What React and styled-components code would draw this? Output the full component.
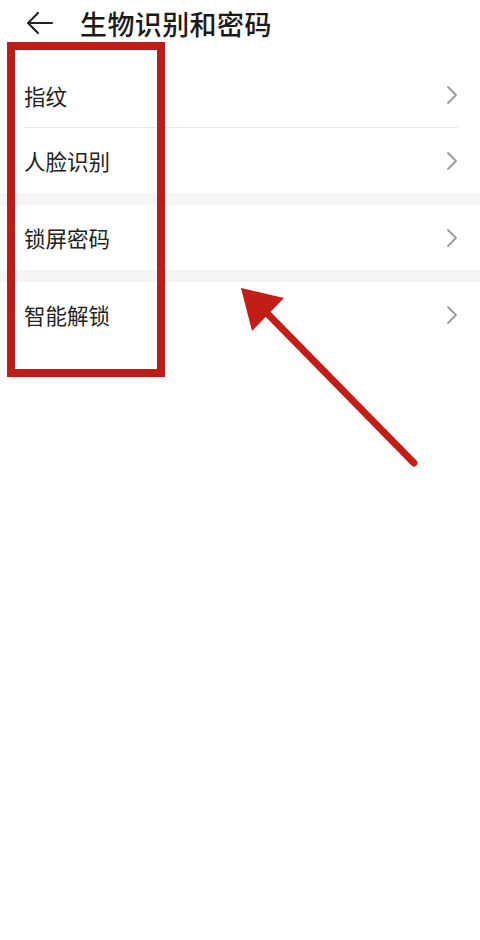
import React from "react";
import styled, { createGlobalStyle } from "styled-components";

const GlobalStyle = createGlobalStyle`
  html, body {
    margin: 0;
    padding: 0;
    background: #fff;
  }
  body {
    font-family: "Noto Sans CJK SC", "Noto Sans", sans-serif;
    color: #1f1f1f;
  }
`;

const groups = [
  ["指纹", "人脸识别"],
  ["锁屏密码"],
  ["智能解锁"],
];

const App = () => {
  return (
    <Page>
      <GlobalStyle />
      <Header>
        <BackButton>
          <svg width="28" height="24" viewBox="0 0 28 24" fill="none">
            <path
              d="M26 12H3M12 2L2 12l10 10"
              stroke="#222"
              strokeWidth="2.2"
              strokeLinecap="round"
              strokeLinejoin="round"
            />
          </svg>
        </BackButton>
        <Title>生物识别和密码</Title>
      </Header>

      {groups.map((items, gi) => (
        <Group key={gi} $first={gi === 0}>
          {items.map((label, i) => (
            <Row key={label} $divider={i < items.length - 1}>
              <Label>{label}</Label>
              <svg width="12" height="20" viewBox="0 0 12 20" fill="none">
                <path
                  d="M2 2l8 8-8 8"
                  stroke="#9a9a9a"
                  strokeWidth="1.8"
                  strokeLinecap="round"
                  strokeLinejoin="round"
                />
              </svg>
            </Row>
          ))}
        </Group>
      ))}

      {/* annotation drawn over the screenshot */}
      <HighlightBox />
      <Arrow viewBox="0 0 480 940">
        <line
          x1="414"
          y1="463"
          x2="256"
          y2="302"
          stroke="#c21d17"
          strokeWidth="7"
          strokeLinecap="round"
        />
        <polygon points="241,288 284,298 252,331" fill="#c21d17" />
      </Arrow>
    </Page>
  );
};

const Page = styled.div`
  position: relative;
  width: 480px;
  min-height: 940px;
  background: #fff;
  overflow: hidden;
`;

const Header = styled.div`
  display: flex;
  align-items: center;
  height: 46px;
  padding-left: 26px;
  gap: 26px;
`;

const BackButton = styled.div`
  display: flex;
  align-items: center;
  width: 28px;
  height: 24px;
`;

const Title = styled.h1`
  margin: 0;
  font-size: 27px;
  font-weight: 500;
  color: #1a1a1a;
  letter-spacing: 0.4px;
`;

const Group = styled.div`
  margin-top: ${(p) => (p.$first ? "17px" : "0")};
  border-top: ${(p) => (p.$first ? "none" : "12px solid #f5f5f5")};
`;

const Row = styled.div`
  display: flex;
  align-items: center;
  justify-content: space-between;
  height: 65px;
  margin: 0 22px 0 24px;
  border-bottom: ${(p) => (p.$divider ? "1px solid #e8e8e8" : "none")};
  box-sizing: border-box;
`;

const Label = styled.span`
  font-size: 21.5px;
  color: #222;
`;

const HighlightBox = styled.div`
  position: absolute;
  left: 7px;
  top: 42px;
  width: 142px;
  height: 319px;
  border: 8px solid #bd1d18;
  pointer-events: none;
`;

const Arrow = styled.svg`
  position: absolute;
  left: 0;
  top: 0;
  width: 480px;
  height: 940px;
  pointer-events: none;
`;

export default App;
